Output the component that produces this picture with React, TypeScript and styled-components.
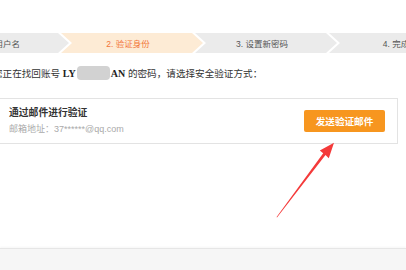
import React from 'react';
import styled, { createGlobalStyle } from 'styled-components';

const Global = createGlobalStyle`
  html, body {
    margin: 0;
    padding: 0;
    background: #fff;
  }
  body {
    width: 406px;
    height: 270px;
    overflow: hidden;
    font-family: "Liberation Sans", "Noto Sans CJK SC", sans-serif;
  }
`;

const steps = ['1. 填写用户名', '2. 验证身份', '3. 设置新密码', '4. 完成'];

export default function App() {
  return (
    <>
      <Global />
      <Page>
        <Main>
          <Steps>
            {steps.map((s, i) => (
              <Step key={s} active={i === 1}>
                {s}
              </Step>
            ))}
          </Steps>
          <Intro>
            您正在找回账号 <Account>LY</Account>
            <Masked />
            <Account>AN</Account>&nbsp;的密码，请选择安全验证方式：
          </Intro>
          <Card>
            <CardInfo>
              <CardTitle>通过邮件进行验证</CardTitle>
              <CardSub>邮箱地址：37******@qq.com</CardSub>
            </CardInfo>
            <SendButton>发送验证邮件</SendButton>
          </Card>
        </Main>
        <Footer />
        <Arrow width="406" height="270" viewBox="0 0 406 270">
          <polygon
            points="277,217.5 325.5,155 328.8,158.2 334,142.8 319.8,150.6 323.2,153.2 276.6,217"
            fill="#f43a3a"
          />
        </Arrow>
      </Page>
    </>
  );
}

const Page = styled.div`
  position: relative;
  width: 406px;
  height: 270px;
  overflow: hidden;
  display: flex;
  flex-direction: column;
`;

const Main = styled.div`
  flex: 1;
  padding-top: 33px;
  background: #fff;
`;

const Steps = styled.div`
  display: flex;
  margin-left: -73px;
  height: 20px;
`;

const Step = styled.div<{ active?: boolean }>`
  flex: 0 0 142px;
  margin-right: -8px;
  height: 20px;
  display: flex;
  align-items: center;
  justify-content: center;
  padding: 0 11px 0 3px;
  box-sizing: border-box;
  font-size: 8.5px;
  white-space: nowrap;
  background: ${p => (p.active ? '#fdebd5' : '#ebebeb')};
  color: ${p => (p.active ? '#f2753a' : '#555')};
  clip-path: polygon(0 0, calc(100% - 11px) 0, 100% 50%, calc(100% - 11px) 100%, 0 100%, 11px 50%);
`;

const Intro = styled.div`
  margin: 13px 0 0 -7px;
  height: 16px;
  line-height: 16px;
  font-size: 9.6px;
  color: #333;
  white-space: nowrap;
`;

const Account = styled.span`
  font-family: "Liberation Serif", serif;
  font-weight: bold;
  font-size: 10px;
  color: #222;
`;

const Masked = styled.span`
  display: inline-block;
  vertical-align: middle;
  width: 33px;
  height: 14px;
  margin: -2px 1px 0;
  border-radius: 4px;
  background: #d2d2d2;
  filter: blur(0.6px);
`;

const Card = styled.div`
  margin: 16px 0 0 -18px;
  width: 416px;
  height: 46px;
  box-sizing: border-box;
  border: 1px solid #e3e3e3;
  display: flex;
  align-items: center;
  justify-content: space-between;
  padding: 0 12px 0 26px;
`;

const CardInfo = styled.div`
  display: flex;
  flex-direction: column;
  gap: 4px;
`;

const CardTitle = styled.div`
  font-size: 9.8px;
  font-weight: bold;
  color: #333;
  line-height: 13px;
`;

const CardSub = styled.div`
  font-size: 9px;
  color: #aaa;
  line-height: 13px;
`;

const SendButton = styled.button`
  width: 81px;
  height: 22px;
  border: none;
  border-radius: 2px;
  background: #f7961f;
  color: #fff;
  font-family: inherit;
  font-size: 9.6px;
  font-weight: bold;
  padding: 0;
`;

const Footer = styled.div`
  height: 21px;
  background: #f6f6f6;
  border-top: 1px solid #e6e6e6;
  box-shadow: 0 -1px 2px rgba(0, 0, 0, 0.04);
`;

const Arrow = styled.svg`
  position: absolute;
  left: 0;
  top: 0;
  pointer-events: none;
`;
